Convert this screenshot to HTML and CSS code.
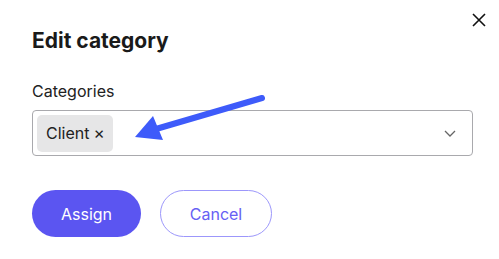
FILE: index.html
```html
<!DOCTYPE html>
<html lang="en">
<head>
<meta charset="utf-8">
<title>Edit category</title>
<link rel="stylesheet" href="styles.css">
</head>
<body>
<div class="dialog">
  <button class="close" aria-label="Close">
    <svg width="14" height="14" viewBox="0 0 14 14"><path d="M1 1L13 13M13 1L1 13" stroke="#111" stroke-width="1.6" fill="none"/></svg>
  </button>
  <h1 class="title">Edit category</h1>
  <div class="label">Categories</div>
  <div class="select">
    <span class="chip">Client <span class="chip-x">×</span></span>
    <svg class="chevron" width="12" height="7" viewBox="0 0 12 7"><path d="M1 1L6 6L11 1" stroke="#666" stroke-width="1.3" fill="none"/></svg>
  </div>
  <div class="actions">
    <button class="btn btn-primary">Assign</button>
    <button class="btn btn-secondary">Cancel</button>
  </div>
  <svg class="arrow" width="499" height="259" viewBox="0 0 499 259">
    <line x1="262" y1="98" x2="156" y2="129" stroke="#3e5bfa" stroke-width="6" stroke-linecap="round"/>
    <polygon points="135,137 153,116 163,140" fill="#3e5bfa"/>
  </svg>
</div>
</body>
</html>
```
FILE: styles.css
```css
html, body {
  margin: 0;
  background: #fff;
}
body {
  font-family: Inter, "Noto Sans", sans-serif;
  color: #1d1d1f;
}
.dialog {
  position: relative;
  width: 499px;
  height: 259px;
  box-sizing: border-box;
  padding: 29px 26px 0 32px;
}
.close {
  position: absolute;
  top: 13px;
  right: 13px;
  width: 14px;
  height: 14px;
  padding: 0;
  border: 0;
  background: none;
  display: flex;
}
.title {
  margin: 0;
  font-size: 21px;
  line-height: 24px;
  font-weight: 700;
  color: #1a1a1a;
}
.label {
  margin-top: 28px;
  font-size: 16px;
  line-height: 20px;
  color: #222;
}
.select {
  margin-top: 9px;
  height: 46px;
  box-sizing: border-box;
  border: 1px solid #a9a9ad;
  border-radius: 4px;
  display: flex;
  align-items: center;
  padding: 0 16px 0 4px;
  justify-content: space-between;
}
.chip {
  background: #e6e6e7;
  border-radius: 5px;
  height: 37px;
  width: 76px;
  box-sizing: border-box;
  padding: 0 0 0 9px;
  display: flex;
  align-items: center;
  font-size: 16px;
  color: #222;
}
.chip-x {
  margin-left: 4px;
  font-size: 17px;
}
.actions {
  margin-top: 34px;
  display: flex;
  gap: 19px;
}
.btn {
  height: 47px;
  border-radius: 24px;
  font-family: Inter, "Noto Sans", sans-serif;
  font-size: 16px;
  cursor: pointer;
  box-sizing: border-box;
}
.btn-primary {
  width: 109px;
  background: #5b55f1;
  color: #fff;
  border: 0;
}
.btn-secondary {
  width: 112px;
  background: #fff;
  color: #6660f4;
  border: 1px solid #9c97fb;
}
.arrow {
  position: absolute;
  left: 0;
  top: 0;
  pointer-events: none;
}
```
